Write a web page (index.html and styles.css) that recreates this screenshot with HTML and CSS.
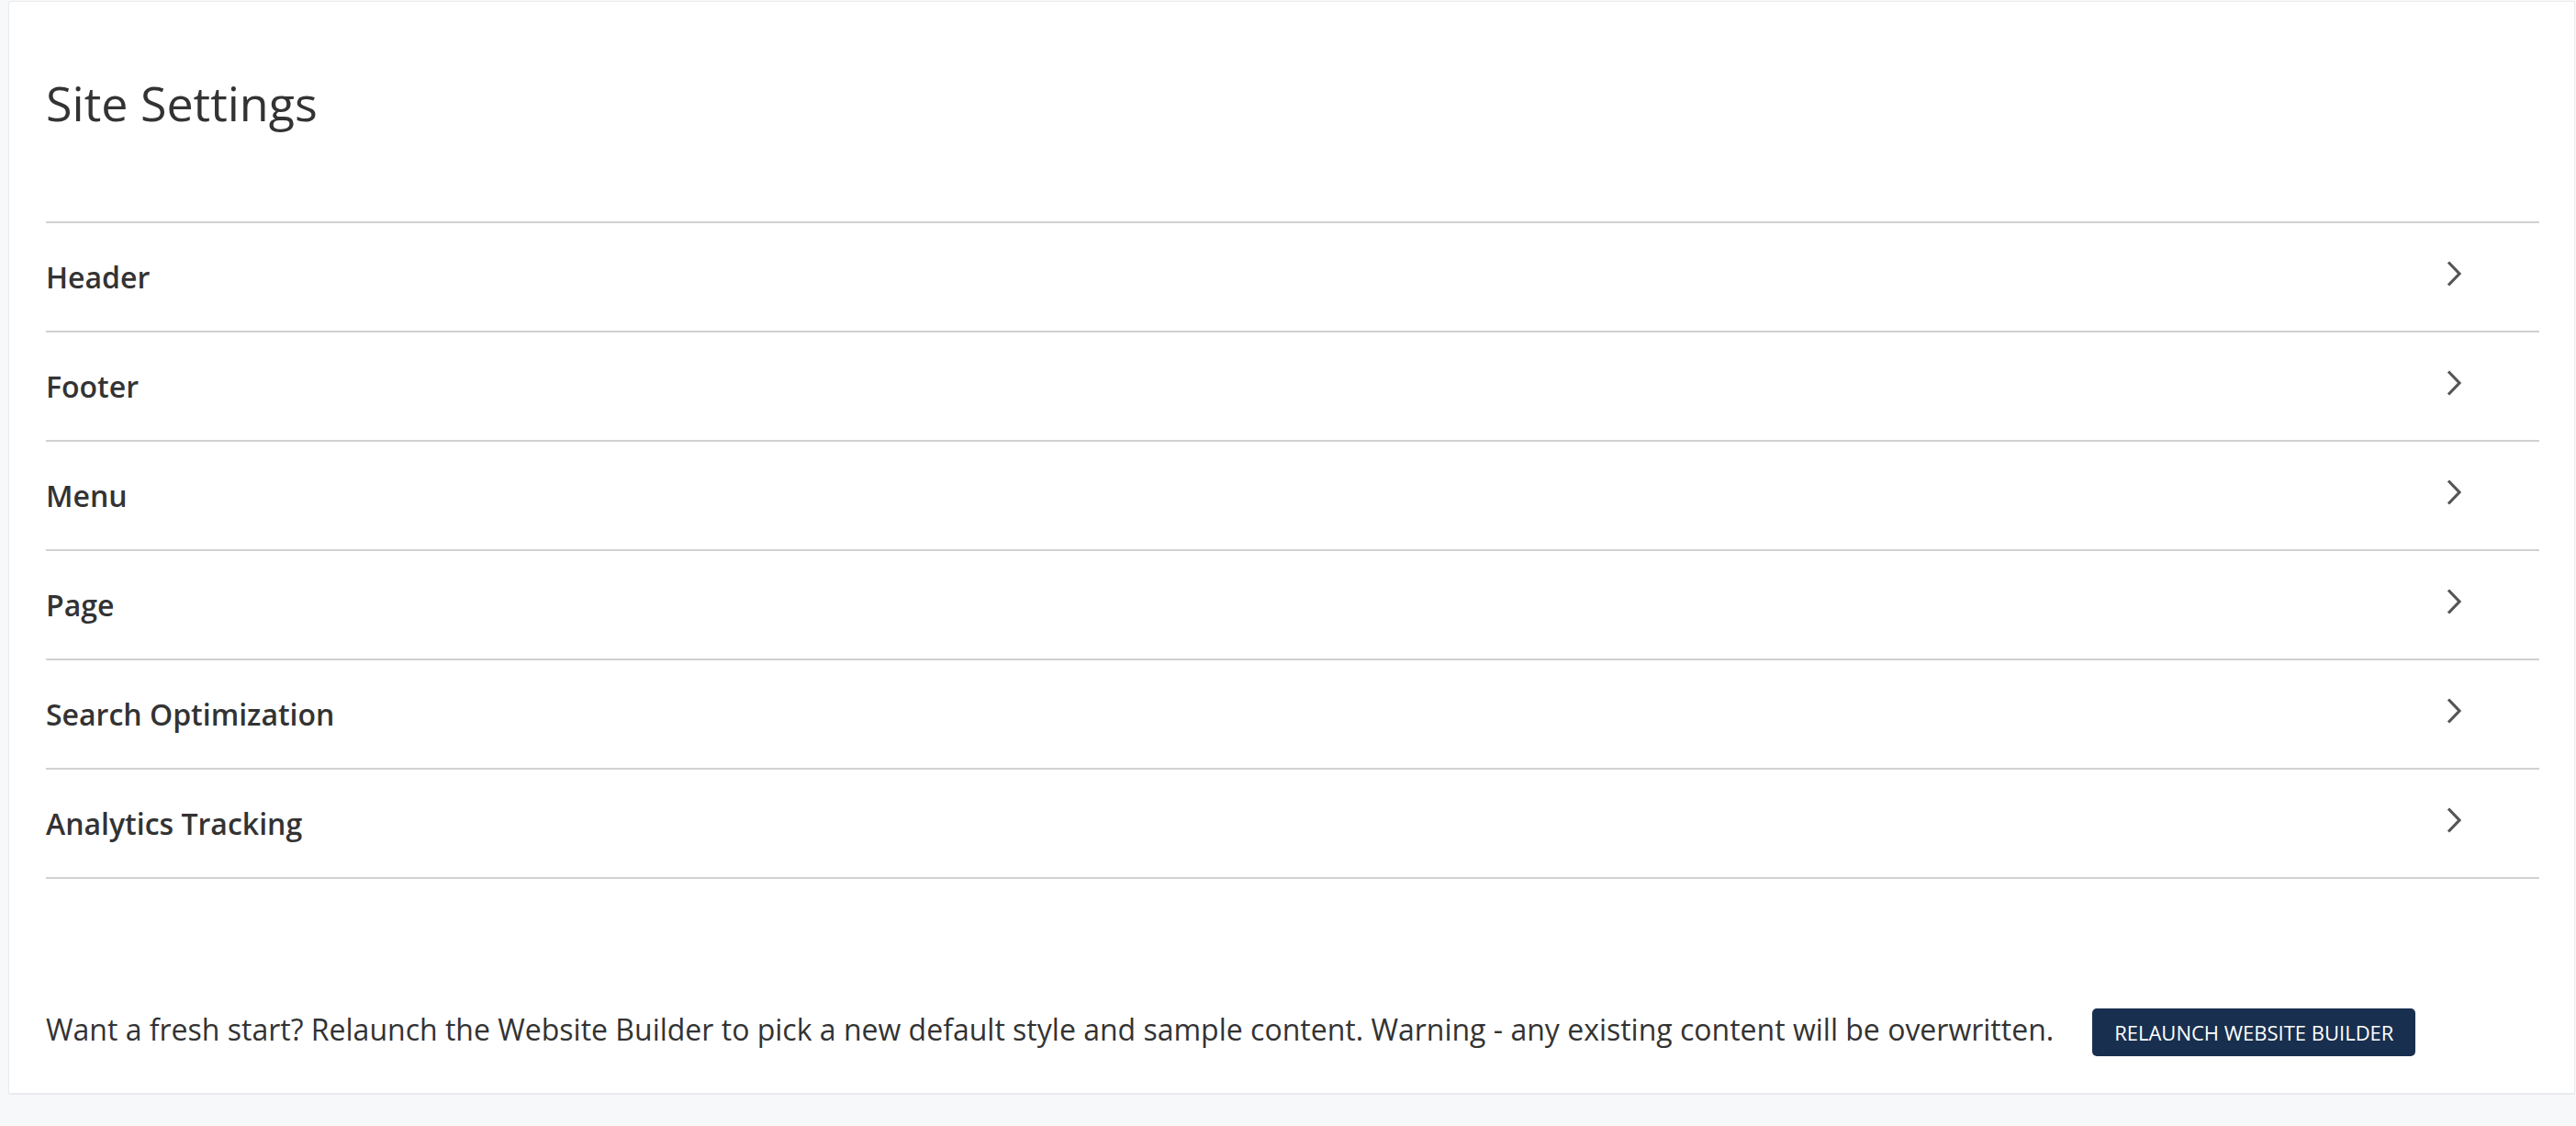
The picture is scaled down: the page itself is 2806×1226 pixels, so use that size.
FILE: index.html
```html
<!DOCTYPE html>
<html lang="en">
<head>
<meta charset="utf-8">
<title>Site Settings</title>
<link rel="stylesheet" href="styles.css">
</head>
<body>
<div class="card">
  <h1 class="title">Site Settings</h1>
  <ul class="settings">
    <li class="row"><span class="label">Header</span><svg class="chev" viewBox="0 0 16 28" width="16" height="28"><polyline points="2,1.5 14,14 2,26.5"/></svg></li>
    <li class="row"><span class="label">Footer</span><svg class="chev" viewBox="0 0 16 28" width="16" height="28"><polyline points="2,1.5 14,14 2,26.5"/></svg></li>
    <li class="row"><span class="label">Menu</span><svg class="chev" viewBox="0 0 16 28" width="16" height="28"><polyline points="2,1.5 14,14 2,26.5"/></svg></li>
    <li class="row"><span class="label">Page</span><svg class="chev" viewBox="0 0 16 28" width="16" height="28"><polyline points="2,1.5 14,14 2,26.5"/></svg></li>
    <li class="row"><span class="label">Search Optimization</span><svg class="chev" viewBox="0 0 16 28" width="16" height="28"><polyline points="2,1.5 14,14 2,26.5"/></svg></li>
    <li class="row"><span class="label">Analytics Tracking</span><svg class="chev" viewBox="0 0 16 28" width="16" height="28"><polyline points="2,1.5 14,14 2,26.5"/></svg></li>
  </ul>
  <div class="relaunch">
    <p class="relaunch-text">Want a fresh start? Relaunch the Website Builder to pick a new default style and sample content. Warning - any existing content will be overwritten.</p>
    <button class="relaunch-btn" type="button">RELAUNCH WEBSITE BUILDER</button>
  </div>
</div>
</body>
</html>
```

FILE: styles.css
```css
html, body {
  margin: 0;
  padding: 0;
  background: #f7f8fa;
  font-family: "Open Sans", "Liberation Sans", sans-serif;
  color: #333333;
}
body {
  padding: 1px 1px 0 9px;
  height: 1226px;
  box-sizing: border-box;
  overflow: hidden;
}
.card {
  background: #ffffff;
  border: 1px solid #e8eaed;
  border-bottom-width: 2px;
  border-radius: 3px;
  padding: 74px 38px 40px 40px;
}
.title {
  margin: 0;
  font-size: 52px;
  font-weight: 400;
  line-height: normal;
  color: #333333;
}
.settings {
  list-style: none;
  margin: 94px 0 0 0;
  padding: 0;
  border-top: 2px solid #d1d1d1;
}
.row {
  display: flex;
  align-items: center;
  justify-content: space-between;
  height: 117px;
  border-bottom: 2px solid #d1d1d1;
  padding-right: 85px;
}
.label {
  font-size: 32px;
  font-weight: 600;
  line-height: normal;
  color: #333333;
}
.chev {
  display: block;
  margin-top: -7px;
}
.chev polyline {
  fill: none;
  stroke: #555555;
  stroke-width: 3.2;
}
.relaunch {
  display: flex;
  align-items: center;
  margin-top: 134px;
  gap: 42px;
}
.relaunch-text {
  margin: 0;
  font-size: 32px;
  font-weight: 400;
  line-height: normal;
  color: #333333;
}
.relaunch-btn {
  font-family: "Open Sans", "Liberation Sans", sans-serif;
  font-size: 22px;
  font-weight: 400;
  color: #ffffff;
  background: #182f4f;
  border: none;
  border-radius: 5px;
  height: 52px;
  padding: 0 24px;
  margin-top: 7px;
}
```
